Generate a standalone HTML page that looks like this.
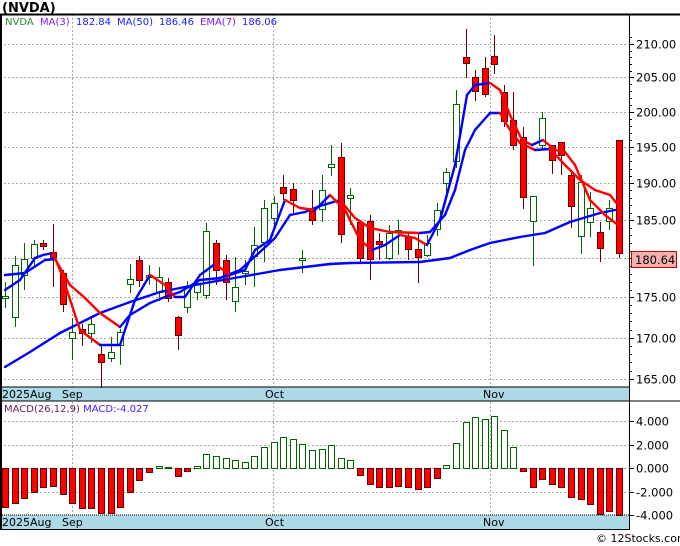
<!DOCTYPE html>
<html><head><meta charset="utf-8"><style>
body{margin:0;background:#fff;width:680px;height:546px;overflow:hidden;font-family:"DejaVu Sans","Liberation Sans",sans-serif}
svg{position:absolute;left:0;top:0}
</style></head><body>
<svg id="s" width="680" height="546" xmlns="http://www.w3.org/2000/svg" font-family="DejaVu Sans, Liberation Sans, sans-serif">
<text x="2" y="12" font-size="13" font-weight="bold" fill="#000">(NVDA)</text>
<g id="grid"></g>
<rect x="0" y="387" width="629" height="14" fill="#add8e6"/>
<rect x="0" y="515" width="629" height="14" fill="#add8e6"/>
<g font-size="11" fill="#000">
<text x="2" y="398">2025Aug</text><text x="62" y="398">Sep</text><text x="265" y="398">Oct</text><text x="483" y="398">Nov</text>
<text x="2" y="526">2025Aug</text><text x="62" y="526">Sep</text><text x="265" y="526">Oct</text><text x="483" y="526">Nov</text>
</g>
<g id="c"></g>
<g id="m"></g>
<g id="l"></g>
<line x1="0" y1="14.5" x2="680" y2="14.5" stroke="#000" stroke-width="2"/>
<line x1="1" y1="14" x2="1" y2="530" stroke="#000" stroke-width="2"/>
<line x1="629.5" y1="14" x2="629.5" y2="530" stroke="#000"/>
<line x1="0" y1="387" x2="629" y2="387" stroke="#000"/>
<line x1="0" y1="401" x2="680" y2="401" stroke="#000"/>
<line x1="0" y1="515" x2="629" y2="515" stroke="#000" stroke-dasharray="1,1"/>
<line x1="0" y1="529.5" x2="629" y2="529.5" stroke="#000"/>
<g id="ax" font-size="11.5" fill="#000"></g>
<rect x="631.5" y="251.5" width="45" height="16" fill="#f4b0b0" stroke="#c00"/>
<text x="635" y="264" font-size="11.5" fill="#000">180.64</text>
<text y="25" font-size="10"><tspan x="5" fill="#2a8a3a">NVDA</tspan><tspan x="40" fill="#7a1aff">MA(3)</tspan><tspan x="76" fill="#1a1aff">182.84</tspan><tspan x="117" fill="#1a1aff">MA(50)</tspan><tspan x="159" fill="#1a1aff">186.46</tspan><tspan x="200" fill="#7a1aff">EMA(7)</tspan><tspan x="242" fill="#1a1aff">186.06</tspan></text>
<text x="4" y="412" font-size="10"><tspan fill="#6a1a4a">MACD(26,12,9)</tspan><tspan fill="#4a1aff">  MACD:-4.027</tspan></text>
<text x="596" y="542" font-size="11" fill="#000">© 12Stocks.com</text>
</svg>
<script>
var NS="http://www.w3.org/2000/svg";
function el(g,t,a){var e=document.createElementNS(NS,t);for(var k in a)e.setAttribute(k,a[k]);document.getElementById(g).appendChild(e);return e;}
function Y(p){return 44+1390*Math.log(210/p);}
var prices=[210,205,200,195,190,185,180,175,170,165];
prices.forEach(function(p){var y=Math.round(Y(p))+.5;el("grid","line",{x1:0,y1:y,x2:629,y2:y,stroke:"#aaa","stroke-dasharray":"2,2"});
el("ax","line",{x1:629,y1:y,x2:634,y2:y,stroke:"#000"});
var t=el("ax","text",{x:636,y:y+4});t.textContent=p.toFixed(2);});
for(var p=164;p<212;p++){var y=Math.round(Y(p))+.5;if(y>14&&y<387)el("ax","line",{x1:629,y1:y,x2:632,y2:y,stroke:"#000"});}
[[421,"4.000"],[444.5,"2.000"],[468,"0.000"],[491.5,"-2.000"],[515,"-4.000"]].forEach(function(a){var y=Math.round(a[0])+.5;
el("grid","line",{x1:0,y1:y,x2:629,y2:y,stroke:"#aaa","stroke-dasharray":"2,2"});el("ax","line",{x1:629,y1:y,x2:634,y2:y,stroke:"#000"});
var t=el("ax","text",{x:636,y:y+4});t.textContent=a[1];});
[72.5,273.5,490.5].forEach(function(x){el("grid","line",{x1:x,y1:14,x2:x,y2:530,stroke:"#aaa","stroke-dasharray":"2,2"});});
var C=[[296,298,282,308,1],[265,317,256,327,1],[259,275,243,290,1],[244,258,240,268,1],[243,246,240,250,0],[252,257,224,287,0],
[273,304,270,312,0],[332,338,318,360,1],[329,333,324,346,0],[324,333,317,343,1],[354,362,345,388,0],[352,358,337,362,1],
[332,345,329,365,1],[279,284,264,293,1],[260,280,256,287,0],[275,277,265,285,1],[277,292,267,301,1],[282,298,278,302,0],
[317,335,316,350,0],[287,307,281,313,1],[284,292,280,300,1],[231,295,223,299,1],[243,270,240,285,0],[260,282,255,300,0],
[287,301,257,312,1],[271,273,260,285,1],[245,256,227,287,1],[208,242,200,262,1],[203,218,196,228,1],[187,193,175,200,0],
[189,200,183,213,0],[258,260,250,273,1],[211,220,190,225,0],[190,209,175,222,1],[164,167,145,176,1],[157,234,143,243,0],
[195,198,188,225,1],[222,258,220,262,0],[221,259,215,280,0],[241,244,233,260,0],[233,258,225,260,1],[230,232,220,255,1],
[237,249,233,260,0],[249,257,232,283,0],[243,255,235,257,1],[210,229,203,236,1],[172,183,168,193,1],[104,161,90,168,1],
[57,63,29,78,0],[77,91,70,101,0],[68,94,57,97,0],[56,64,35,74,0],[92,121,85,127,0],[120,145,92,150,0],
[137,197,127,209,0],[196,221,196,266,1],[118,145,112,150,1],[145,160,145,174,0],[142,155,142,175,0],[175,206,172,228,0],
[182,236,175,254,1],[208,222,192,237,1],[232,248,222,262,0],[208,221,200,230,1],[140,253,140,258,0]];
var N=C.length,st=(619-5)/(N-1);
C.forEach(function(c,i){var x=Math.round(5+i*st);
el("c","line",{x1:x+.5,y1:c[2],x2:x+.5,y2:c[3],stroke:c[4]?"#006400":"#600","stroke-width":1});
if(c[4])el("c","rect",{x:x-3+.5,y:c[0]+.5,width:6,height:Math.max(1,c[1]-c[0]),fill:"#fff",stroke:"#006400"});
else el("c","rect",{x:x-3+.5,y:c[0]+.5,width:6,height:Math.max(1,c[1]-c[0]),fill:"#f00",stroke:"#600"});});
var M=[507,503,498,492,487,486,494,503,508,508,513,513,507,492,480,472,466,467,476,471,466,454,456,458,460,462,456,447,442,437,439,444,450,449,445,458,460,475,484,487,487,486,487,489,487,478,465,443,422,417,419,416,430,447,471,487,479,484,487,497,499,504,514,511,515];
while(M.length<N)M.push(515);
M.forEach(function(v,i){var x=Math.round(5+i*st);var z=468;
if(v<z)el("m","rect",{x:x-3+.5,y:v+.5,width:6,height:z-v,fill:"#fff",stroke:"#006400"});
else el("m","rect",{x:x-3+.5,y:z+.5,width:6,height:Math.max(1,v-z),fill:"#f00",stroke:"#600"});});
function line(pts,fixed){for(var i=1;i<pts.length;i++){var a=pts[i-1],b=pts[i];
el("l","line",{x1:a[0],y1:a[1],x2:b[0],y2:b[1],stroke:fixed||(b[1]>a[1]+0.5?"#f00":"#00f"),"stroke-width":2.4,"stroke-linecap":"round"});}}
line([[5,367],[30,352],[60,333],[100,313],[130,302],[160,292],[200,284],[240,277],[280,270],[330,264],[350,263],[420,262],[450,258],[470,250],[490,243],[520,237],[545,233],[570,222],[600,213],[615,210]],"#00f");
line([[5,275],[25,273],[45,260],[55,259],[70,285],[85,298],[100,313],[120,327],[130,315],[150,303],[165,297],[180,292],[200,280],[220,278],[240,270],[260,252],[275,238],[290,215],[305,212],[320,206],[340,200],[355,218],[370,228],[390,232],[420,233],[430,232],[445,215],[455,190],[465,150],[475,130],[490,113],[500,113],[510,130],[520,143],[535,150],[550,149],[565,165],[580,180],[595,190],[610,195],[618,205]]);
line([[5,290],[20,280],[35,258],[43,255],[53,253],[62,275],[80,330],[100,345],[120,345],[135,300],[150,275],[165,285],[175,297],[185,297],[200,275],[215,264],[230,275],[245,270],[255,250],[270,240],[285,200],[300,208],[315,210],[330,195],[345,210],[360,240],[372,250],[385,245],[400,235],[415,238],[427,245],[440,220],[455,165],[467,95],[475,85],[490,83],[500,90],[510,115],[522,140],[532,145],[543,140],[555,150],[565,152],[575,165],[590,200],[605,215],[618,225]]);
</script>
</body></html>
